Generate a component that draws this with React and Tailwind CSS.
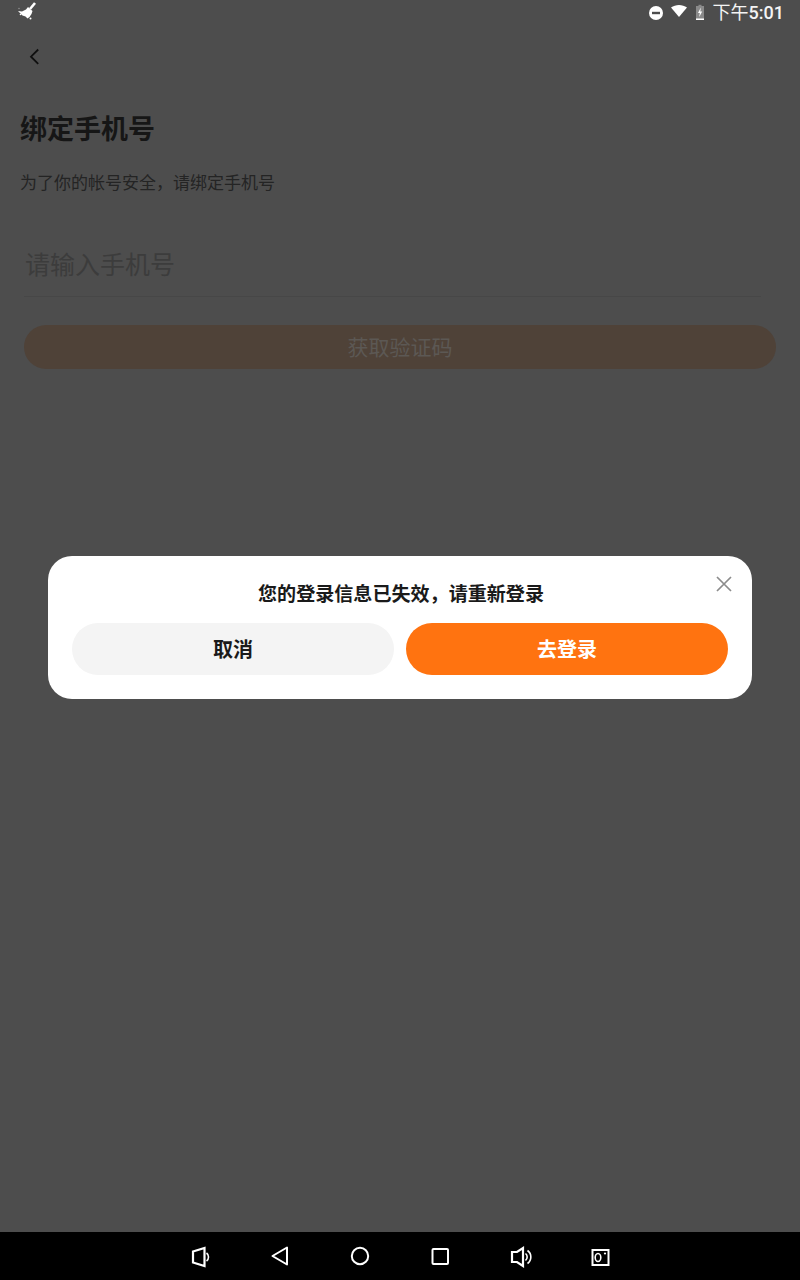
import React from "react";

const cjk = "font-['Noto_Sans_CJK_SC','Noto_Sans',sans-serif]";

function StatusBar() {
  return (
    <div className="flex h-[26px] items-start justify-between pl-[17px] pr-4 text-white">
      <svg width="20" height="20" viewBox="0 0 20 20" fill="white" className="mt-[2px]">
        <path d="M18 1 L13 7" stroke="white" strokeWidth="2.6" />
        <path d="M11 5 L15.5 9 L14.5 12 L12.5 15 L10.5 16.5 L8.5 14.5 L5.5 13.5 L1 9 L5 9.5 L9 7.5 Z" />
        <circle cx="13.5" cy="16.5" r="1" />
        <circle cx="3.5" cy="12.5" r="0.8" />
        <circle cx="2" cy="6.5" r="0.7" fill="#9a9a9a" />
      </svg>
      <div className="flex items-start">
        <svg width="16" height="16" viewBox="0 0 16 16" className="mt-[5px]">
          <circle cx="8" cy="8" r="7" fill="white" />
          <rect x="4" y="6.8" width="8" height="2.4" fill="#4d4d4d" />
        </svg>
        <svg width="18" height="14" viewBox="0 0 18 14" className="ml-[6px] mt-[4px]">
          <path d="M1 3.5 C5.5 0 12.5 0 17 3.5 L9 13 Z" fill="white" />
        </svg>
        <svg width="10" height="18" viewBox="0 0 10 18" className="ml-[7px] mt-[4px]">
          <rect x="1" y="2" width="8" height="14" fill="#8a8a8a" />
          <rect x="3.5" y="0.8" width="3" height="1.2" fill="#8a8a8a" />
          <rect x="1" y="14.5" width="8" height="1.5" fill="white" />
          <path d="M5.8 3.5 L3 9 H4.8 L4.2 13 L7.2 7.5 H5.3 Z" fill="white" />
        </svg>
        <span className="ml-[8px] text-[18px] leading-[26px] text-[#f4f4f4] font-['Roboto','Noto_Sans_CJK_SC',sans-serif]">
          下午<span className="font-medium">5:01</span>
        </span>
      </div>
    </div>
  );
}

function Content() {
  return (
    <div className={`flex flex-col ${cjk}`}>
      <div className="flex h-[62px] items-center pl-[22px]">
        <svg width="24" height="24" viewBox="0 0 24 24" fill="none" stroke="#0f0f0f" strokeWidth="2" className="mt-[2px]">
          <path d="M17 5 L9 13 L17 21" transform="translate(0 -1) scale(0.9 0.9) translate(1 0)" />
        </svg>
      </div>
      <h1 className="mt-[18px] pl-5 text-[27px] font-bold leading-[44px] text-[#161616]">绑定手机号</h1>
      <p className="mt-[19px] pl-5 text-[17px] leading-[26px] text-[#242424]">为了你的帐号安全，请绑定手机号</p>
      <div className="mx-6 mt-[34px] flex h-[68px] w-[737px] items-center border-b border-[#474747]">
        <span className="pl-px text-[25px] leading-8 text-[#3c3c3c]">请输入手机号</span>
      </div>
      <div className="mx-6 mt-[28px] flex h-[44px] items-center justify-center rounded-full bg-[#4f4238] pb-[2px]">
        <span className="text-[21px] leading-8 text-[#5c5854]">获取验证码</span>
      </div>
    </div>
  );
}

function Dialog() {
  return (
    <div className="absolute inset-x-0 top-[556px] flex justify-center">
      <div className={`relative flex h-[143px] w-[704px] flex-col rounded-[24px] bg-white px-6 ${cjk}`}>
        <h2 className="mt-[23px] pl-[2px] text-center text-[19.07px] font-bold leading-[28px] text-[#1a1a1a]">您的登录信息已失效，请重新登录</h2>
        <svg width="18" height="18" viewBox="0 0 18 18" className="absolute right-[19px] top-[19px]" fill="none" stroke="#8c8c8c" strokeWidth="1.7">
          <path d="M2 2 L16 16 M16 2 L2 16" />
        </svg>
        <div className="mt-[16px] flex gap-3">
          <button className="flex h-[52px] flex-1 items-center justify-center rounded-full bg-[#f4f4f4] text-[20px] font-bold text-[#1a1a1a]">取消</button>
          <button className="flex h-[52px] flex-1 items-center justify-center rounded-full bg-[#ff7310] text-[20px] font-bold text-white">去登录</button>
        </div>
      </div>
    </div>
  );
}

function NavBar() {
  return (
    <div className="flex h-12 items-center justify-center gap-[56px] bg-black">
      <svg width="24" height="24" viewBox="0 0 24 24" fill="none" stroke="white" strokeWidth="2.2">
        <path d="M5 7.5 L16.5 4 V22 L5 18.5 Z" />
        <path d="M18.5 9 A5 5 0 0 1 18.5 17" strokeWidth="1.6" />
      </svg>
      <svg width="24" height="24" viewBox="0 0 24 24" fill="none" stroke="white" strokeWidth="2" strokeLinejoin="round">
        <path d="M4.5 12 L19 3.5 V20.5 Z" />
      </svg>
      <svg width="24" height="24" viewBox="0 0 24 24" fill="none" stroke="white" strokeWidth="2">
        <circle cx="12" cy="12" r="8.2" />
      </svg>
      <svg width="24" height="24" viewBox="0 0 24 24" fill="none" stroke="white" strokeWidth="2">
        <rect x="4.5" y="5" width="15.5" height="15" rx="1" />
      </svg>
      <svg width="24" height="24" viewBox="0 0 24 24" fill="none" stroke="white" strokeWidth="2.2">
        <path d="M4 8 H9 L15 4 V22 L9 18 H4 Z" />
        <path d="M17.5 9.5 A4.5 4.5 0 0 1 17.5 16.5 M19.5 6.5 A8 8 0 0 1 19.5 19.5" strokeWidth="1.6" />
      </svg>
      <svg width="24" height="24" viewBox="0 0 24 24" fill="none" stroke="white" strokeWidth="2">
        <rect x="4.5" y="6" width="16" height="15" />
        <ellipse cx="10" cy="13.5" rx="2.8" ry="4" strokeWidth="1.6" />
        <circle cx="17" cy="9.5" r="1.1" fill="white" stroke="none" />
      </svg>
    </div>
  );
}

export default function App() {
  return (
    <div className="relative flex h-[1280px] w-[800px] flex-col overflow-hidden bg-[#4d4d4d]">
      <div className="flex-1">
        <StatusBar />
        <Content />
      </div>
      <Dialog />
      <NavBar />
    </div>
  );
}
